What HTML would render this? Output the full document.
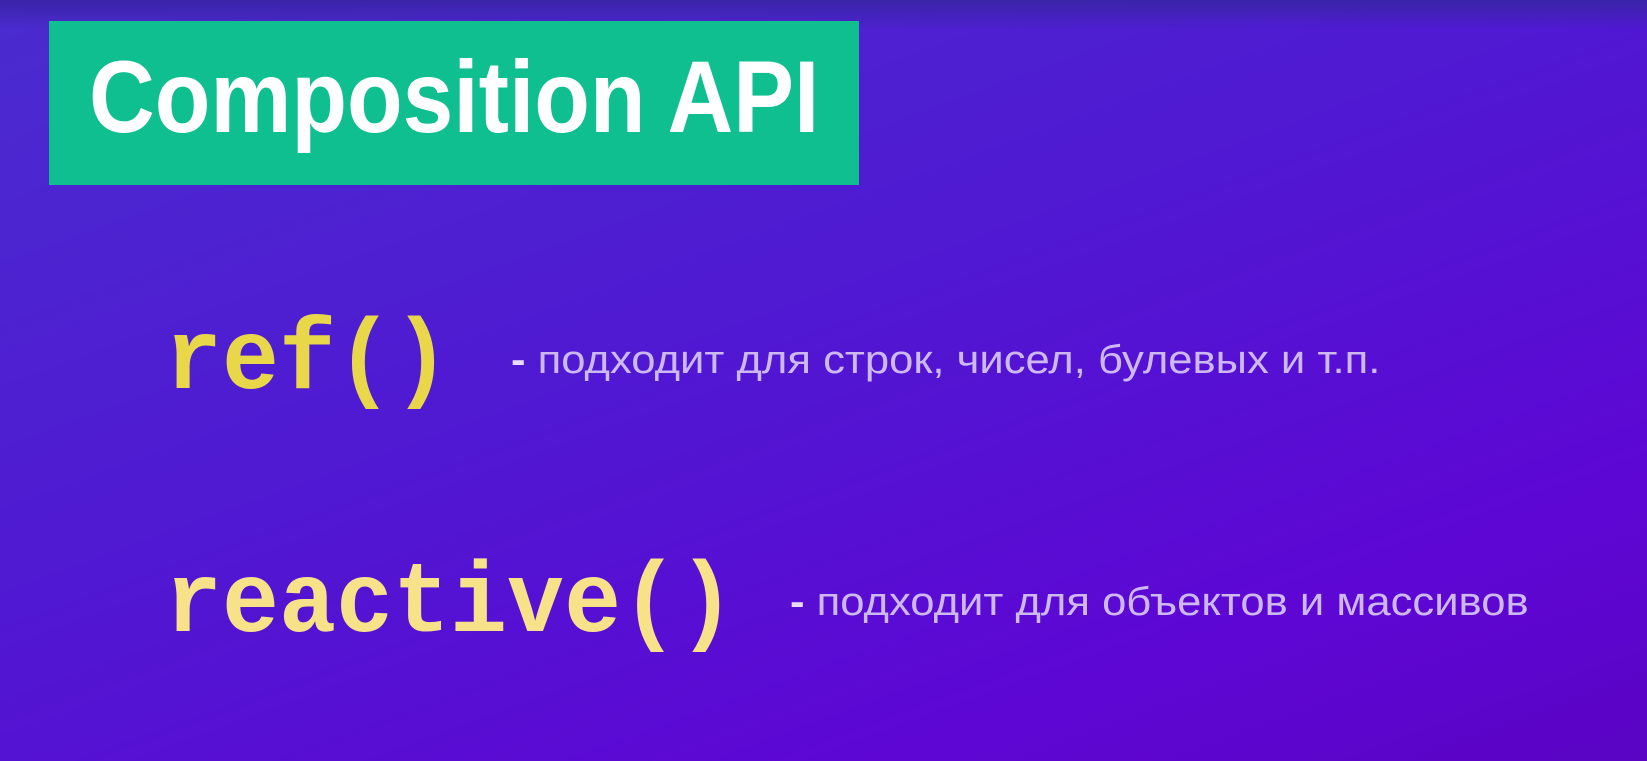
<!DOCTYPE html>
<html><head><meta charset="utf-8"><style>
html,body{margin:0;padding:0}
body{width:1647px;height:761px;overflow:hidden;position:relative;
background:linear-gradient(160deg,#4a2ccf 0%,#5018d2 45%,#5e06d4 80%,#5a04c4 100%);}
.top{position:absolute;left:0;top:0;width:1647px;height:30px;background:linear-gradient(#3a24a8,rgba(74,44,207,0))}
.box{position:absolute;left:49px;top:21px;width:810px;height:164px;background:#10bf90}
.t{position:absolute;white-space:nowrap;line-height:1;transform-origin:0 0}
.title{left:89px;top:39px;font:bold 102px "Liberation Sans",sans-serif;color:#fff;transform:scaleX(0.893)}
.code{font-family:"Liberation Mono",monospace;font-size:100px;font-weight:bold}
.d{font-family:"Liberation Sans",sans-serif;font-size:40px;color:#cdb8f2;transform:scaleX(1.09)}
</style></head><body>
<div class="top"></div>
<div class="box"></div>
<div class="t title">Composition API</div>
<div class="t code" style="left:165px;top:313px;color:#e9d74a;transform:scaleX(0.95)">ref()</div>
<div class="t d" style="left:511px;top:340px"><b style="color:#e8dcf8">-</b> подходит для строк, чисел, булевых и т.п.</div>
<div class="t code" style="left:165px;top:556px;color:#f7e189;transform:scaleX(0.95)">reactive()</div>
<div class="t d" style="left:790px;top:582px"><b style="color:#e8dcf8">-</b> подходит для объектов и массивов</div>
</body></html>
